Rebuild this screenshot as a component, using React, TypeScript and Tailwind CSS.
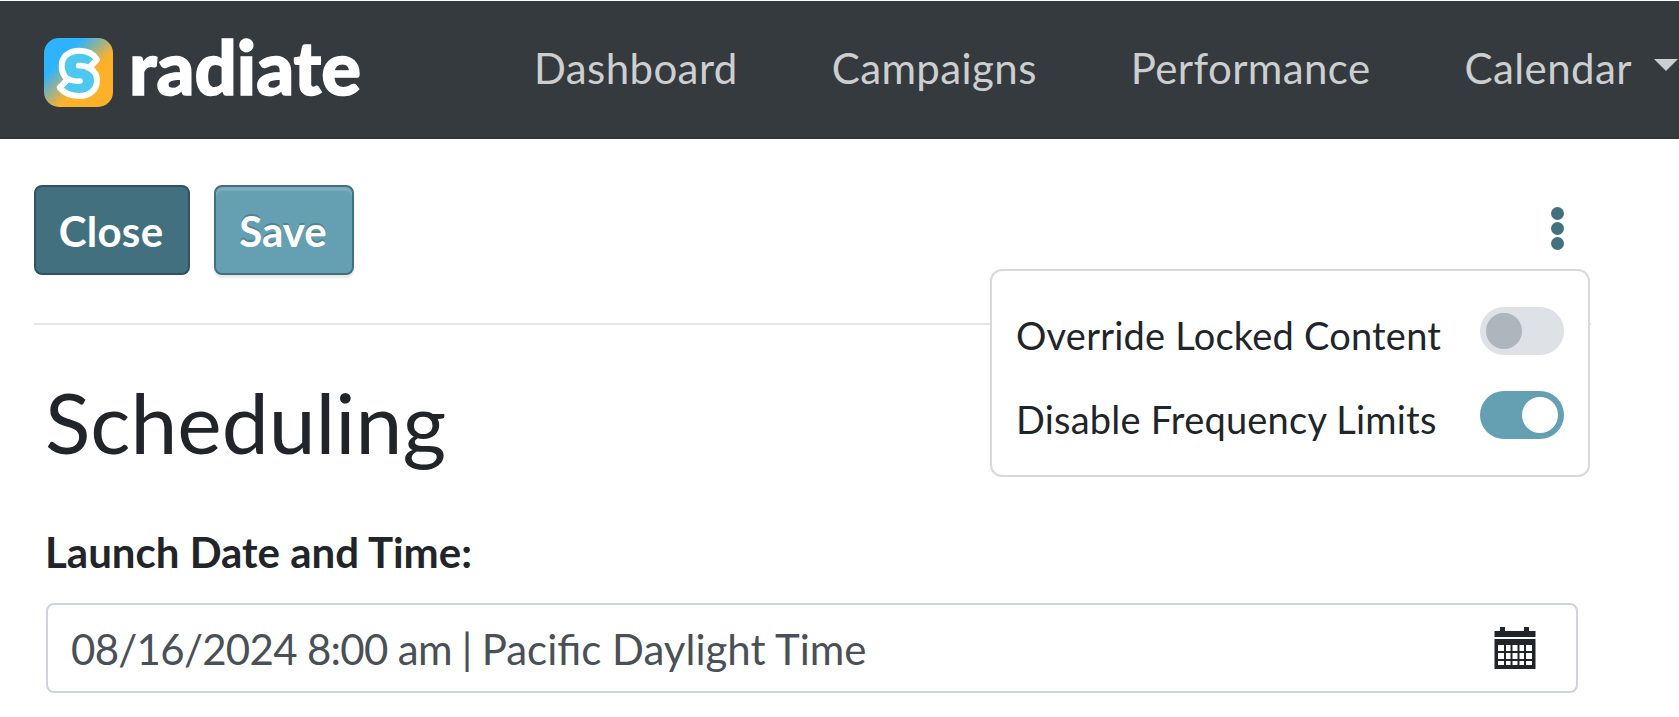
import React, { useState } from 'react';

interface NavItem {
    label: string;
    hasMenu?: boolean;
}

const navItems: NavItem[] = [
    { label: 'Dashboard' },
    { label: 'Campaigns' },
    { label: 'Performance' },
    { label: 'Calendar', hasMenu: true },
];

const Logo: React.FC = () => (
    <svg width="320" height="136" viewBox="0 -36 320 136" className="shrink-0">
        <defs>
            <linearGradient id="badge" x1="0" y1="0" x2="1" y2="1">
                <stop offset="0.28" stopColor="#2db3ff" />
                <stop offset="0.6" stopColor="#fdb12b" />
            </linearGradient>
        </defs>
        <rect x="0" y="1" width="69" height="69" rx="15" fill="url(#badge)" />
        <g transform="translate(-44 -37) scale(0.33333)">
            <path
                d="M291 179 C280 160 262 152 238 152 C204 152 185 172 185 198 C185 215 191 228 203 238 L179 263 C193 280 212 288 237 288 C272 288 291 268 291 241 C291 225 283 212 268 203 Z"
                fill="#4fc8f0"
                stroke="#fff"
                strokeWidth="18"
                strokeLinejoin="round"
            />
            <path
                d="M268 205 C258 198 247 196 236 197 M203 236 C214 243 226 245 240 243"
                fill="none"
                stroke="#fff"
                strokeWidth="17"
                strokeLinecap="round"
            />
        </g>
        <text
            x="85"
            y="58"
            fill="#fff"
            stroke="#fff"
            strokeWidth="1.5"
            fontFamily="Lato, sans-serif"
            fontWeight="900"
            fontSize="75"
            textLength="232"
            lengthAdjust="spacingAndGlyphs"
        >
            radiate
        </text>
    </svg>
);

const CalendarIcon: React.FC = () => (
    <svg width="42" height="42" viewBox="0 0 42 42" fill="#212529">
        <rect x="6" y="0" width="5" height="5" />
        <rect x="30" y="0" width="5" height="5" />
        <rect x="0.5" y="4" width="41" height="6" />
        <path d="M0.5 12H41.5V42H0.5Z" />
        <path
            fill="#fff"
            d="M4 18h6v6H4zM12 18h4.5v6H12zM18.5 18h5v6h-5zM25.5 18H30v6h-4.500zM32 18h6v6h-6zM4 26h6v6H4zM12 26h4.500v6H12zM18.5 26h5v6h-5zM25.5 26H30v6h-4.500zM32 26h6v6h-6zM4 34h6v4H4zM12 34h4.500v4H12zM18.5 34h5v4h-5zM25.5 34H30v4h-4.500zM32 34h6v4h-6z"
        />
    </svg>
);

interface ToggleRowProps {
    label: string;
    checked: boolean;
    onChange: (value: boolean) => void;
}

const ToggleRow: React.FC<ToggleRowProps> = ({ label, checked, onChange }) => (
    <div className="flex items-start justify-between h-[84px]">
        <span className="text-[38px] leading-[56px] tracking-[0.22px] text-[#212529] whitespace-nowrap">{label}</span>
        <button
            role="switch"
            aria-checked={checked}
            aria-label={label}
            onClick={() => onChange(!checked)}
            className={`flex w-[84px] h-12 p-1.5 rounded-full ${checked ? 'justify-end bg-[#659fb2]' : 'justify-start bg-[#dee2e6]'}`}
        >
            <span className={`size-9 rounded-full ${checked ? 'bg-white' : 'bg-[#adb5bd]'}`}></span>
        </button>
    </div>
);

const App: React.FC = () => {
    const [menuOpen, setMenuOpen] = useState(true);
    const [overrideLocked, setOverrideLocked] = useState(false);
    const [disableLimits, setDisableLimits] = useState(true);

    return (
        <div className="w-full h-[717px] overflow-hidden bg-white pt-px font-[Lato,sans-serif] text-[#212529]">
            <nav className="flex items-start h-[138px] pl-11 bg-[#353a3f] border-b-2 border-[#33363b] overflow-hidden">
                <Logo />
                <ul className="flex gap-[94px] mt-9 ml-[170px] shrink-0 text-[42px] leading-[63px] tracking-[0.4px] text-[#cdced0]">
                    {navItems.map((item) => (
                        <li key={item.label} className="flex items-center shrink-0 whitespace-nowrap">
                            {item.label}
                            {item.hasMenu && (
                                <span className="ml-[22px] -mt-[7px] border-x-[12px] border-t-[12px] border-x-transparent border-t-[#cdced0]"></span>
                            )}
                        </li>
                    ))}
                </ul>
            </nav>

            <main className="pl-[34px] w-[1591px]">
                <div className="relative flex items-start justify-between h-[186px] pt-[46px] border-b-2 border-[#e5e5e5]">
                    <div className="flex gap-6 text-[42px] font-bold text-white">
                        <button className="w-[156px] h-[90px] pr-0.5 pt-0.5 rounded-lg border-2 border-[#30525f] bg-[#43707f] tracking-[0.3px]">
                            Close
                        </button>
                        <button className="w-[140px] h-[90px] pr-0.5 pt-0.5 rounded-lg border-2 border-[#43707f] bg-[#659fb2] shadow-[inset_0_4px_0_rgba(255,255,255,0.15),0_3px_2px_rgba(0,0,0,0.09)] [text-shadow:0_-2px_0_rgba(0,0,0,0.2)]">
                            Save
                        </button>
                    </div>
                    <button
                        aria-label="More options"
                        onClick={() => setMenuOpen(!menuOpen)}
                        className="flex flex-col gap-0.5 mt-[22px] mr-[27px]"
                    >
                        <span className="size-[13px] rounded-full bg-[#43707f]"></span>
                        <span className="size-[13px] rounded-full bg-[#43707f]"></span>
                        <span className="size-[13px] rounded-full bg-[#43707f]"></span>
                    </button>
                    {menuOpen && (
                        <div className="absolute right-px top-[130px] w-[600px] h-[208px] pl-6 pr-6 pt-9 bg-white border-2 border-[#d9d9d9] rounded-xl">
                            <ToggleRow label="Override Locked Content" checked={overrideLocked} onChange={setOverrideLocked} />
                            <ToggleRow label="Disable Frequency Limits" checked={disableLimits} onChange={setDisableLimits} />
                        </div>
                    )}
                </div>

                <section className="pl-3 pr-[13px] pt-[47px]">
                    <h1 className="-ml-px text-[84px] leading-[100px]">Scheduling</h1>
                    <label className="block -ml-px mt-[49px] text-[42px] leading-[63px] font-bold">Launch Date and Time:</label>
                    <div className="flex items-center justify-between h-[90px] mt-[19px] pl-[23px] pr-10 border-2 border-[#ced4da] rounded-lg text-[42px] text-[#495057]">
                        <span className="pt-0.5 whitespace-nowrap">
                            <span className="tracking-[-0.7px]">08/16/2024 8:00 am | </span>
                            Pacific Daylight Time
                        </span>
                        <CalendarIcon />
                    </div>
                </section>
            </main>
        </div>
    );
};

export default App;
